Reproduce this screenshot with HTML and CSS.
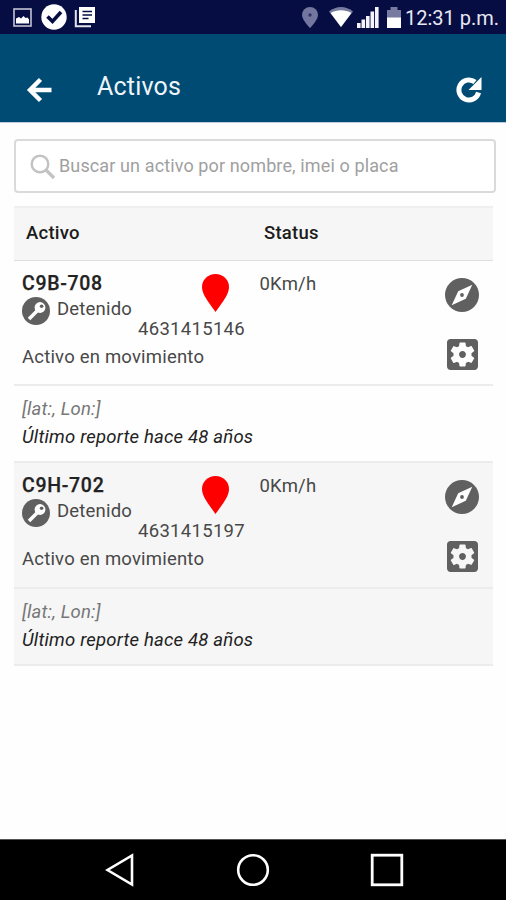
FILE: index.html
```html
<!DOCTYPE html>
<html lang="es">
<head>
<meta charset="utf-8">
<title>Activos</title>
<link rel="stylesheet" href="styles.css">
</head>
<body>
<svg class="defs" width="0" height="0" aria-hidden="true">
  <symbol id="key" viewBox="0 0 28 28">
    <circle cx="14" cy="14" r="14" fill="#606060"/>
    <path d="M16 13 7 22" stroke="#fff" stroke-width="3.600" fill="none"/>
    <circle cx="18" cy="10.500" r="5.400" fill="#fff"/>
    <circle cx="19.600" cy="9.200" r="1.800" fill="#606060"/>
  </symbol>
  <symbol id="pin" viewBox="0 0 27 38">
    <path d="M13.500 0C6 0 0 5.600 0 13c0 5 3 10 6 14.500L13.500 38 21 27.500C24 23 27 18 27 13 27 5.600 21 0 13.500 0z" fill="#f00"/>
  </symbol>
  <symbol id="compass" viewBox="0 0 34 34">
    <circle cx="17" cy="17" r="17" fill="#606060"/>
    <path d="M27.300 6.700 20.800 20.800 6.700 27.300 13.200 13.200z" fill="#fff"/>
    <circle cx="17" cy="17" r="1.900" fill="#606060"/>
  </symbol>
  <symbol id="gear" viewBox="3 3 18 18">
    <path fill="#606060" d="M12 10c-1.100 0-2 .9-2 2s.9 2 2 2 2-.9 2-2-.9-2-2-2zm7-7H5c-1.110 0-2 .9-2 2v14c0 1.100.89 2 2 2h14c1.110 0 2-.9 2-2V5c0-1.100-.89-2-2-2zm-1.750 9c0 .23-.02.46-.05.68l1.480 1.160c.13.110.17.3.08.450l-1.400 2.420c-.09.150-.27.210-.43.150l-1.740-.7c-.36.280-.76.510-1.180.690l-.26 1.850c-.03.170-.18.300-.35.300h-2.800c-.17 0-.32-.13-.35-.29l-.26-1.850c-.43-.18-.82-.41-1.180-.69l-1.740.7c-.16.060-.34 0-.43-.15l-1.400-2.420c-.09-.15-.05-.34.08-.45l1.480-1.160c-.03-.23-.05-.46-.05-.69 0-.23.02-.46.05-.68l-1.480-1.160c-.13-.11-.17-.3-.08-.45l1.400-2.420c.09-.15.27-.21.43-.15l1.740.7c.36-.28.76-.51 1.180-.69l.26-1.850c.03-.17.18-.3.35-.3h2.800c.17 0 .32.130.35.290l.26 1.850c.43.180.82.410 1.180.690l1.740-.7c.16-.06.34 0 .43.150l1.400 2.420c.09.150.05.340-.08.450l-1.480 1.160c.03.230.05.460.05.690z"/>
  </symbol>
</svg>

<div class="statusbar">
  <svg width="19" height="19" viewBox="0 0 19 19"><rect x="1" y="1" width="17" height="17" fill="none" stroke="#c4c4d4" stroke-width="1.600"/><path d="M3 15.500V10.500l3-1.500 2 1.500L10.500 8l2 2 2-.5 1.500 2v4z" fill="#fff"/></svg>
  <svg class="s-check" width="26" height="26" viewBox="0 0 26 26"><circle cx="13" cy="13" r="12.700" fill="#fff"/><path d="M6.500 12.500l5 5L20 8" fill="none" stroke="#060d42" stroke-width="3.600"/></svg>
  <svg class="s-news" width="22" height="22" viewBox="0 0 22 22"><path d="M5 1h16v16H5z" fill="#fff"/><path d="M8.500 5.500h9.500M8.500 9h9.500M8.500 12.500h6" stroke="#060d42" stroke-width="1.500"/><path d="M1.800 4v16.200H17" fill="none" stroke="#e4e4ee" stroke-width="2"/></svg>
  <div class="status-right">
    <svg class="s-loc" width="16" height="21" viewBox="0 0 16 21"><path d="M8 0a8 8 0 0 0-8 8c0 5 8 13 8 13s8-8 8-13a8 8 0 0 0-8-8z" fill="#7377a0"/><circle cx="8" cy="8" r="1.700" fill="#303666"/></svg>
    <svg class="s-wifi" width="24" height="20" viewBox="0 0 24 20"><path d="M12 20 0 4.500C7-1.500 17-1.500 24 4.500z" fill="#777b9f"/><path d="M12 20 1.600 6C8 2.400 16 2.400 22.400 6z" fill="#fff"/></svg>
    <svg class="s-sig" width="22" height="21" viewBox="0 0 22 21"><path d="M0 16h3.600v5H0zM4.500 12.500h3.600V21H4.500zM9 9h3.600v12H9zM13.500 4.500h3.600V21h-3.600zM18 0h3.600v21H18z" fill="#f4f4fa"/></svg>
    <svg class="s-bat" width="14" height="21" viewBox="0 0 14 21"><path d="M0 3h3.500V0h7v3H14v8H0z" fill="#777b9f"/><path d="M0 10.500h14V21H0z" fill="#fff"/></svg>
    <span class="clock">12:31 p.m.</span>
  </div>
</div>

<header class="appbar">
  <svg width="26" height="26" viewBox="0 0 26 26"><path d="M25.500 13H3M14.500 2.500 4 13 14.500 23.500" fill="none" stroke="#fff" stroke-width="4.400"/></svg>
  <h1>Activos</h1>
  <svg class="refresh" width="26" height="26" viewBox="0 0 26 26"><path d="M22.600 15.500A10 10 0 1 1 19 5" fill="none" stroke="#fff" stroke-width="5"/><path d="M25.500 0v13H12.500z" fill="#fff"/></svg>
</header>

<main>
  <div class="search">
    <svg width="26" height="26" viewBox="0 0 26 26"><circle cx="10" cy="10" r="8.300" fill="none" stroke="#c2c2c2" stroke-width="2.400"/><path d="M16 16l8 8" stroke="#c2c2c2" stroke-width="3.200"/></svg>
    <span>Buscar un activo por nombre, imei o placa</span>
  </div>

  <section class="table">
    <div class="thead"><b class="c1">Activo</b><b class="c2">Status</b></div>

    <article class="asset">
      <div class="row">
        <div class="info">
          <div class="top">
            <div class="id">
              <div class="name">C9B-708</div>
              <div class="state"><svg width="28" height="28"><use href="#key"/></svg><span>Detenido</span></div>
            </div>
            <div class="place"><svg width="27" height="38"><use href="#pin"/></svg><span class="imei">4631415146</span></div>
          </div>
          <div class="move">Activo en movimiento</div>
        </div>
        <div class="speed">0Km/h</div>
        <div class="actions"><svg width="34" height="34"><use href="#compass"/></svg><svg width="31" height="31"><use href="#gear"/></svg></div>
      </div>
      <div class="report"><div class="coords">[lat:, Lon:]</div><div class="last">Último reporte hace 48 años</div></div>
    </article>

    <article class="asset alt">
      <div class="row">
        <div class="info">
          <div class="top">
            <div class="id">
              <div class="name">C9H-702</div>
              <div class="state"><svg width="28" height="28"><use href="#key"/></svg><span>Detenido</span></div>
            </div>
            <div class="place"><svg width="27" height="38"><use href="#pin"/></svg><span class="imei">4631415197</span></div>
          </div>
          <div class="move">Activo en movimiento</div>
        </div>
        <div class="speed">0Km/h</div>
        <div class="actions"><svg width="34" height="34"><use href="#compass"/></svg><svg width="31" height="31"><use href="#gear"/></svg></div>
      </div>
      <div class="report"><div class="coords">[lat:, Lon:]</div><div class="last">Último reporte hace 48 años</div></div>
    </article>
  </section>
</main>

<nav class="navbar">
  <svg width="30" height="34" viewBox="0 0 30 34"><path d="M27 2.500v29L2.500 17z" fill="none" stroke="#fff" stroke-width="2.600"/></svg>
  <svg width="34" height="34" viewBox="0 0 34 34"><circle cx="17" cy="17" r="14.800" fill="none" stroke="#fff" stroke-width="2.600"/></svg>
  <svg width="34" height="34" viewBox="0 0 34 34"><rect x="2.200" y="2.200" width="29.600" height="29.600" fill="none" stroke="#fff" stroke-width="2.800"/></svg>
</nav>
</body>
</html>
```

FILE: styles.css
```css
* { box-sizing: border-box; }
body {
  margin: 0;
  width: 506px;
  height: 900px;
  display: flex;
  flex-direction: column;
  overflow: hidden;
  background: #fefefe;
  color: #484848;
  font-family: Roboto, sans-serif;
  font-size: 18.5px;
}
svg { display: block; flex: none; }
.defs { position: absolute; }

.statusbar {
  height: 34px;
  flex: none;
  display: flex;
  align-items: center;
  padding: 0 8px 0 13px;
  background: #060d42;
}
.s-check { margin-left: 9px; }
.s-news { margin-left: 7px; }
.status-right { margin-left: auto; display: flex; align-items: center; }
.s-wifi { margin-left: 11px; }
.s-sig { margin-left: 4px; }
.s-bat { margin-left: 8px; }
.clock {
  margin-left: 4px;
  width: 93px;
  font-size: 20px;
  line-height: 24px;
  white-space: nowrap;
  color: #e8e8f2;
  padding-top: 2px;
}

.appbar {
  height: 89px;
  flex: none;
  display: flex;
  align-items: center;
  padding: 23px 24px 0 26px;
  background: #004b73;
  border-bottom: 1px solid #b9cbdc;
}
.appbar h1 {
  margin: -6px 0 0 45px;
  font-size: 25px;
  font-weight: 400;
  line-height: 30px;
  letter-spacing: 0.2px;
  color: #eef5fa;
}
.refresh { margin-left: auto; }

main { flex: 1; padding: 16px 10px 0 14px; }
.search {
  height: 54px;
  display: flex;
  align-items: center;
  padding-left: 14px;
  border: 2px solid #dadada;
  border-radius: 4px;
  background: #fff;
  color: #a0a0a0;
}
.search svg { margin-top: 2px; }
.search span { margin: -1px 0 0 3px; font-size: 18px; letter-spacing: 0.12px; }

.table { margin: 13px 3px 0 0; }
.thead {
  height: 54px;
  display: flex;
  align-items: center;
  padding: 0 12px 3px;
  background: #f6f6f6;
  border-top: 2px solid #efefef;
  color: #1c1c1c;
}
.thead b { font-weight: 500; letter-spacing: 0.25px; }
.c1 { width: 238px; }
.row {
  height: 124px;
  display: flex;
  padding: 10px 14px 0 8px;
  border-top: 1px solid #dedede;
}
.info { width: 237.500px; }
.top { display: flex; height: 70px; }
.id { width: 116px; }
.name { font-size: 19.5px; font-weight: 500; line-height: 26px; color: #222; letter-spacing: 0.7px; -webkit-text-stroke: 0.25px #222; }
.state { display: flex; align-items: center; gap: 7px; }
.state span { margin-top: -5px; letter-spacing: 0.2px; }
.place { width: 108px; padding-top: 3px; }
.place svg { margin-left: 64px; }
.imei { display: block; line-height: 22px; margin-top: 6px; letter-spacing: 0.3px; }
.move { line-height: 22px; margin-top: 5px; letter-spacing: 0.2px; }
.speed { line-height: 26px; letter-spacing: 0.2px; }
.actions {
  margin-left: auto;
  padding-top: 7px;
  display: flex;
  flex-direction: column;
  align-items: center;
  gap: 27px;
}
.report {
  height: 77px;
  padding: 9px 8px 0;
  border-top: 2px solid #ececec;
  font-style: italic;
  line-height: 28px;
  letter-spacing: 0.2px;
}
.coords { color: #777; }
.last { color: #222; }
.alt { background: #f6f6f6; border-bottom: 2px solid #ececec; }
.alt .row { height: 126px; border-top: 2px solid #ececec; padding-top: 10px; }

.navbar {
  height: 61px;
  flex: none;
  display: flex;
  align-items: center;
  justify-content: space-between;
  padding: 0 102px 0 105px;
  background: #000;
  border-top: 1px solid #555;
}
```
